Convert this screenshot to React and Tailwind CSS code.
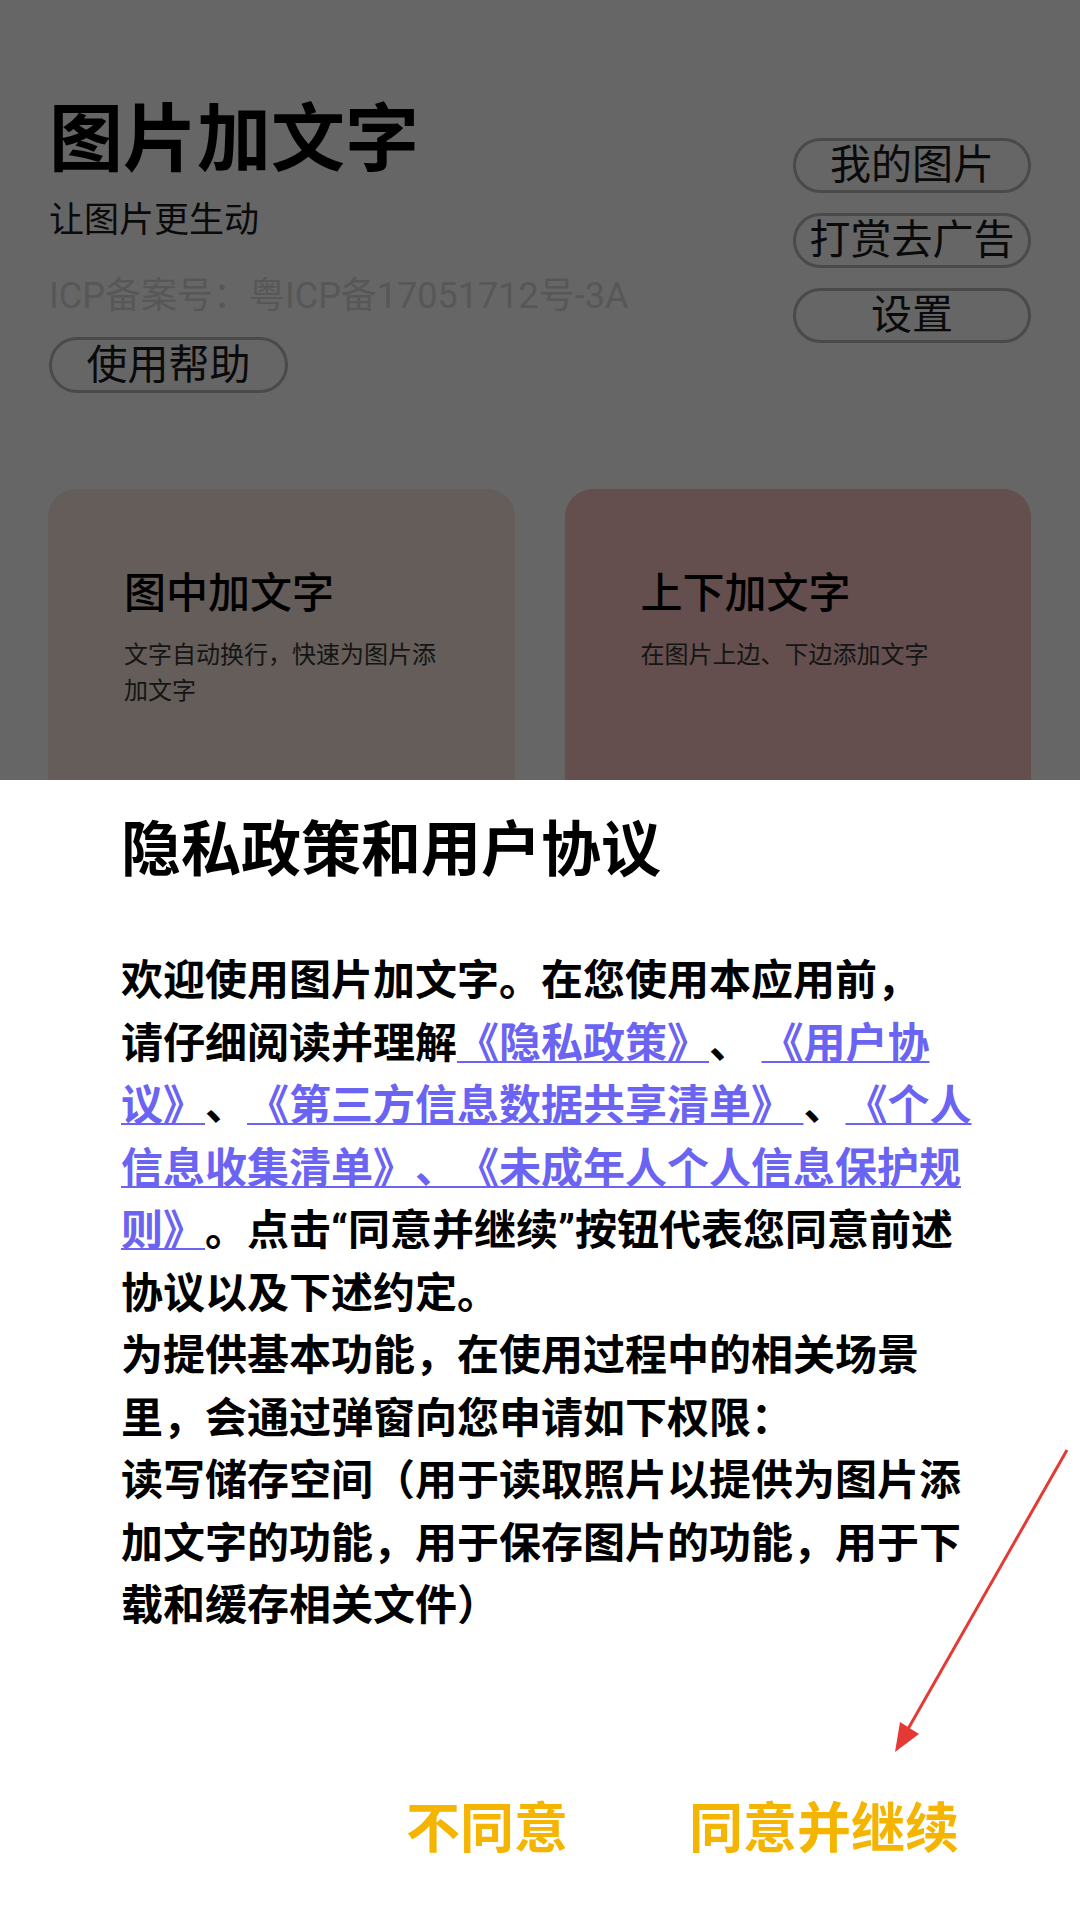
const LINK = "text-[#6b63f2] underline decoration-2 underline-offset-[3px]";

function OutlineButton({ label, className = "" }) {
  return (
    <div
      className={`flex h-[55px] w-[238px] items-center justify-center rounded-full border-[3px] border-[#4a4a4a] text-[41px] leading-none text-[#0a0a0a] ${className}`}
    >
      {label}
    </div>
  );
}

function FeatureCard({ title, desc, bg }) {
  return (
    <div className={`h-[420px] rounded-[28px] px-[76px] pt-[77px] ${bg}`}>
      <div className="text-[42px] font-medium leading-[56px] text-black">{title}</div>
      <div className="mt-[15px] text-[24px] leading-[36px] text-[#151515]">{desc}</div>
    </div>
  );
}

const bodyLines = [
  [["欢迎使用图片加文字。在您使用本应用前，"]],
  [["请仔细阅读并理解"], ["《隐私政策》", true], ["、 "], ["《用户协", true]],
  [["议》", true], ["、"], ["《第三方信息数据共享清单》 ", true], ["、"], ["《个人", true]],
  [["信息收集清单》、《未成年人个人信息保护规", true]],
  [["则》", true], ["。点击“同意并继续”按钮代表您同意前述"]],
  [["协议以及下述约定。"]],
  [["为提供基本功能，在使用过程中的相关场景"]],
  [["里，会通过弹窗向您申请如下权限："]],
  [["读写储存空间（用于读取照片以提供为图片添"]],
  [["加文字的功能，用于保存图片的功能，用于下"]],
  [["载和缓存相关文件）"]],
];

export default function App() {
  return (
    <div className="relative h-[1920px] w-[1080px] overflow-hidden bg-[#666666] font-['Roboto','Noto_Sans_CJK_SC',sans-serif] [text-spacing-trim:space-all]">
      {/* page behind the dialog */}
      <div className="flex justify-between px-[49px]">
        <div className="pt-[95px]">
          <div className="h-[90px] text-[74px] font-bold leading-[90px] text-black">图片加文字</div>
          <div className="mt-[16px] text-[35px] leading-[40px] text-[#0a0a0a]">让图片更生动</div>
          <div className="mt-[35px] text-[36px] leading-[40px] text-[#575757]">ICP备案号：粤ICP备17051712号-3A</div>
          <OutlineButton label="使用帮助" className="mt-[21px] h-[56px] w-[239px]" />
        </div>
        <div className="flex flex-col gap-[20px] pt-[138px]">
          <OutlineButton label="我的图片" />
          <OutlineButton label="打赏去广告" />
          <OutlineButton label="设置" />
        </div>
      </div>

      <div className="mt-[96px] grid grid-cols-2 gap-[50px] pl-[48px] pr-[49px]">
        <FeatureCard title="图中加文字" desc="文字自动换行，快速为图片添加文字" bg="bg-[#655d59]" />
        <FeatureCard title="上下加文字" desc="在图片上边、下边添加文字" bg="bg-[#644f4e]" />
      </div>

      {/* privacy bottom sheet */}
      <div className="absolute inset-x-0 top-[780px] bottom-0 bg-white px-[121px] pt-[35px]">
        <div className="text-[60px] font-bold leading-[72px] text-black">隐私政策和用户协议</div>
        <div className="mt-[63px] w-[840px] text-[42px] font-bold leading-[62.5px] text-black">
          {bodyLines.map((line, i) => (
            <div key={i} className="whitespace-pre">
              {line.map(([text, link], j) => (
                <span key={j} className={link ? LINK : ""}>
                  {text}
                </span>
              ))}
            </div>
          ))}
        </div>
        <div className="mt-[160px] flex h-[64px] items-center justify-end gap-[121px] text-[54px] font-bold leading-[64px] text-[#f4b400]">
          <span>不同意</span>
          <span>同意并继续</span>
        </div>
      </div>

      {/* red annotation arrow */}
      <svg className="pointer-events-none absolute left-0 top-0" width="1080" height="1920" viewBox="0 0 1080 1920">
        <line x1="1067" y1="1450" x2="908" y2="1729" stroke="#e53935" strokeWidth="3" />
        <polygon points="895,1752 919,1734 900,1722" fill="#e53935" />
      </svg>
    </div>
  );
}
